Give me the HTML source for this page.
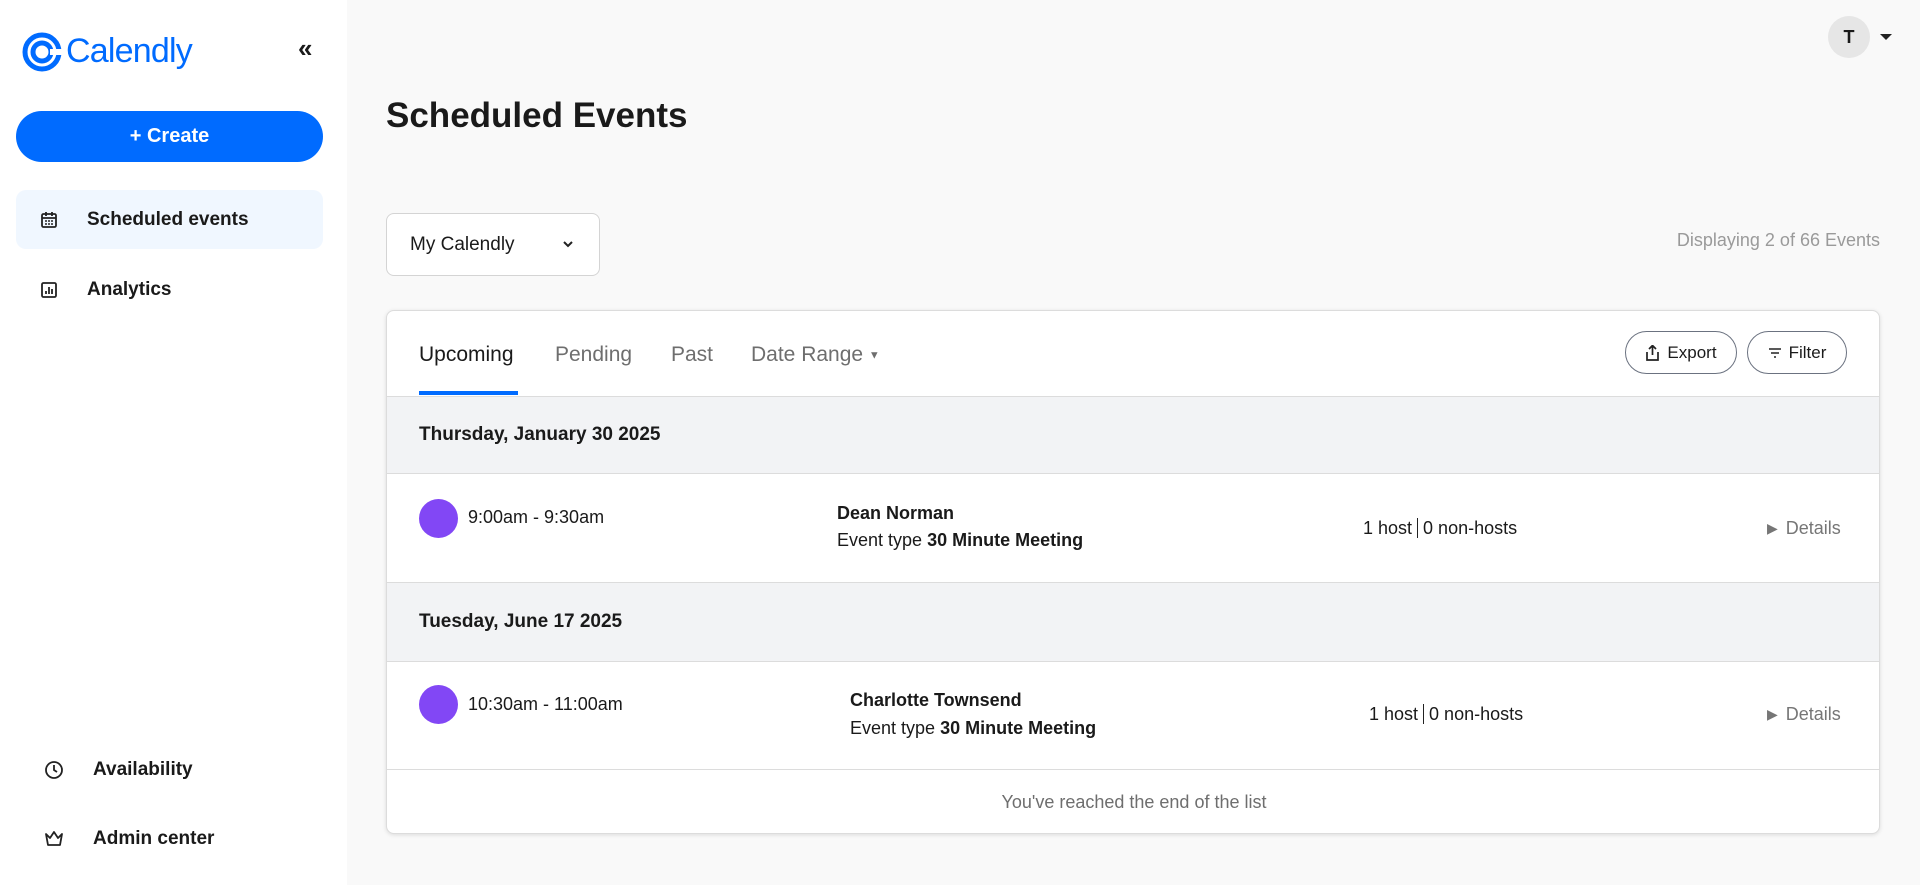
<!DOCTYPE html>
<html><head><meta charset="utf-8"><style>
*{box-sizing:border-box;margin:0;padding:0}
body{width:1920px;height:885px;background:#f9f9f9;font-family:"Liberation Sans",sans-serif;color:#1a1a1a;position:relative;overflow:hidden}
.abs{position:absolute}
.side{left:0;top:0;width:347px;height:885px;background:#fff}
.create{left:16px;top:111px;width:307px;height:51px;border-radius:26px;background:#006bff;color:#fff;font-weight:bold;font-size:20px;display:flex;align-items:center;justify-content:center}
.nav{left:16px;width:307px;height:59px;border-radius:10px;display:flex;align-items:center;font-weight:bold;font-size:19px}
.nav svg{margin-left:24px;margin-right:29px}
.card{left:386px;top:310px;width:1494px;height:524px;background:#fff;border:1px solid #dcdcdc;border-radius:8px;box-shadow:0 1px 4px rgba(0,0,0,.12);overflow:hidden}
.tab{top:32px;font-size:21px;color:#6e6e6e}
.btn{top:20px;height:43px;border:1px solid #6b7280;border-radius:22px;display:flex;align-items:center;justify-content:center;font-size:17px;gap:7px}
.dh{left:0;width:1494px;background:#f2f3f5;border-top:1px solid #dcdcdc;border-bottom:1px solid #dcdcdc;font-weight:bold;font-size:19px;padding-left:32px;display:flex;align-items:center}
.dot{width:39px;height:39px;border-radius:50%;background:#8247f5}
.t{font-size:18px}
.det{font-size:18px;color:#767676;display:flex;align-items:center;gap:8px}
</style></head><body>
<div class="abs side"></div>
<svg class="abs" style="left:22px;top:32px" width="40" height="40" viewBox="0 0 40 40"><circle cx="20" cy="20" r="17" fill="none" stroke="#006bff" stroke-width="5"/><circle cx="20" cy="20" r="9" fill="none" stroke="#006bff" stroke-width="5"/><rect x="28" y="17" width="12" height="6" fill="#fff"/></svg>
<div class="abs" style="left:66px;top:32px;font-size:34px;color:#006bff;letter-spacing:-0.8px">Calendly</div>
<div class="abs" style="left:298px;top:33px;font-size:26px;font-weight:bold;color:#1a1a1a">«</div>
<div class="abs create">+ Create</div>
<div class="abs nav" style="top:190px;background:#f0f7ff"><svg width="18" height="18" viewBox="0 0 18 18"><rect x="2" y="3" width="14" height="13" rx="1.5" fill="none" stroke="#222" stroke-width="1.8"/><path d="M2 7h14M6 1v4M12 1v4" stroke="#222" stroke-width="1.8"/><path d="M5 10h2M8 10h2M11 10h2M5 13h2M8 13h2M11 13h2" stroke="#222" stroke-width="1.5"/></svg>Scheduled events</div>
<div class="abs nav" style="top:260px"><svg width="18" height="18" viewBox="0 0 18 18"><rect x="2" y="2" width="14" height="14" rx="1.5" fill="none" stroke="#222" stroke-width="1.8"/><path d="M6 13v-3M9 13V6M12 13V8" stroke="#222" stroke-width="1.8"/></svg>Analytics</div>
<div class="abs nav" style="top:740px;left:20px"><svg width="20" height="20" viewBox="0 0 20 20"><circle cx="10" cy="10" r="8" fill="none" stroke="#222" stroke-width="1.8"/><path d="M10 5v5l3 2" fill="none" stroke="#222" stroke-width="1.8"/></svg>Availability</div>
<div class="abs nav" style="top:809px;left:20px"><svg width="20" height="20" viewBox="0 0 20 20"><path d="M2 5l4 4 4-6 4 6 4-4-2 11H4z" fill="none" stroke="#222" stroke-width="1.8" stroke-linejoin="round"/></svg>Admin center</div>
<div class="abs" style="left:1828px;top:16px;width:42px;height:42px;border-radius:50%;background:#e6e6e6;display:flex;align-items:center;justify-content:center;font-weight:bold;font-size:18px">T</div>
<div class="abs" style="left:1880px;top:34px;width:0;height:0;border-left:6px solid transparent;border-right:6px solid transparent;border-top:6px solid #222"></div>
<div class="abs" style="left:386px;top:96px;font-size:35px;font-weight:bold">Scheduled Events</div>
<div class="abs" style="left:386px;top:213px;width:214px;height:63px;background:#fff;border:1px solid #d4d4d4;border-radius:8px;font-size:19px;display:flex;align-items:center;padding-left:23px">My Calendly<svg style="position:absolute;left:175px;top:26px" width="12" height="8" viewBox="0 0 12 8"><path d="M2 2l4 4 4-4" fill="none" stroke="#222" stroke-width="2"/></svg></div>
<div class="abs" style="right:40px;top:230px;font-size:18px;color:#9a9a9a">Displaying 2 of 66 Events</div>
<div class="abs card">
<div class="abs tab" style="left:32px;color:#1a1a1a">Upcoming</div>
<div class="abs" style="left:32px;top:80px;width:99px;height:4px;background:#006bff"></div>
<div class="abs tab" style="left:168px">Pending</div>
<div class="abs tab" style="left:284px">Past</div>
<div class="abs tab" style="left:364px">Date Range <span style="font-size:11px;vertical-align:middle">▼</span></div>
<div class="abs btn" style="left:1238px;width:112px"><svg width="15" height="16" viewBox="0 0 15 16"><path d="M7.5 10V1M4 4l3.5-3.5L11 4M2 7v8h11V7" fill="none" stroke="#222" stroke-width="1.7"/></svg>Export</div>
<div class="abs btn" style="left:1360px;width:100px"><svg width="14" height="10" viewBox="0 0 14 10"><path d="M1 1h12M3 5h8M6 9h2" stroke="#222" stroke-width="1.6"/></svg>Filter</div>
<div class="abs dh" style="top:85px;height:78px">Thursday, January 30 2025</div>
<div class="abs dot" style="left:32px;top:188px"></div>
<div class="abs t" style="left:81px;top:196px">9:00am - 9:30am</div>
<div class="abs t" style="left:450px;top:192px;font-weight:bold">Dean Norman</div>
<div class="abs t" style="left:450px;top:219px">Event type <b>30 Minute Meeting</b></div>
<div class="abs t" style="left:976px;top:207px">1 host<span style="border-left:1px solid #222;margin:0 5px"></span>0 non-hosts</div>
<div class="abs det" style="left:1380px;top:207px"><span style="font-size:14px">▶</span>Details</div>
<div class="abs dh" style="top:271px;height:80px">Tuesday, June 17 2025</div>
<div class="abs dot" style="left:32px;top:374px"></div>
<div class="abs t" style="left:81px;top:383px">10:30am - 11:00am</div>
<div class="abs t" style="left:463px;top:379px;font-weight:bold">Charlotte Townsend</div>
<div class="abs t" style="left:463px;top:407px">Event type <b>30 Minute Meeting</b></div>
<div class="abs t" style="left:982px;top:393px">1 host<span style="border-left:1px solid #222;margin:0 5px"></span>0 non-hosts</div>
<div class="abs det" style="left:1380px;top:393px"><span style="font-size:14px">▶</span>Details</div>
<div class="abs" style="left:0;top:458px;width:1494px;border-top:1px solid #dcdcdc;height:66px;display:flex;align-items:center;justify-content:center;font-size:18px;color:#6e6e6e">You've reached the end of the list</div>
</div>
</body></html>
